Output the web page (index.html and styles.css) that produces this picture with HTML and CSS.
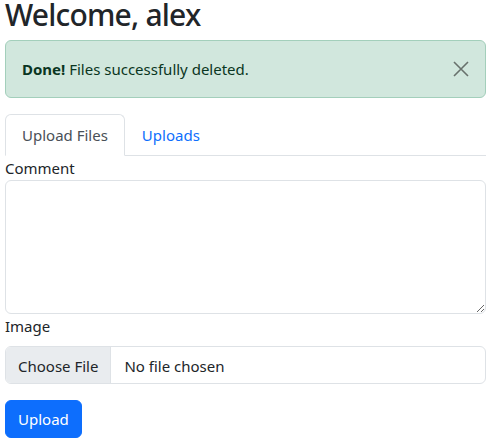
FILE: index.html
```html
<!DOCTYPE html>
<html lang="en">
<head>
<meta charset="utf-8">
<title>Welcome</title>
<link rel="stylesheet" href="styles.css">
</head>
<body>
<div class="container">
  <h1 class="title">Welcome, alex</h1>
  <div class="alert">
    <span><strong>Done!</strong> Files successfully deleted.</span>
    <button class="btn-close" type="button" aria-label="Close">
      <svg width="16" height="16" viewBox="0 0 16 16" aria-hidden="true"><path d="M1 1L15 15M15 1L1 15" stroke="currentColor" stroke-width="1.6" fill="none"/></svg>
    </button>
  </div>
  <ul class="tabs">
    <li><a class="tab active" href="#">Upload Files</a></li>
    <li><a class="tab" href="#">Uploads</a></li>
  </ul>
  <form class="form">
    <label class="label" for="comment">Comment</label>
    <textarea id="comment" class="control" rows="5"></textarea>
    <label class="label label-gap" for="image">Image</label>
    <input id="image" class="control file" type="file">
    <button class="btn" type="button">Upload</button>
  </form>
</div>
</body>
</html>
```

FILE: styles.css
```css
* { box-sizing: border-box; }
html, body { margin: 0; }
body {
  font-family: "Noto Sans", "Open Sans", sans-serif;
  font-size: 15px;
  line-height: 24px;
  color: #212529;
  background: #fff;
}
.container { padding: 0 5px; }
.title {
  margin: 0 0 10px;
  font-size: 30px;
  line-height: 30px;
  font-weight: 500;
  letter-spacing: -0.8px;
}
.alert {
  position: relative;
  background: #d1e7dd;
  border: 1px solid #a3cfbb;
  color: #0a3622;
  border-radius: 6px;
  padding: 16px 48px 16px 16px;
  margin-bottom: 16px;
}
.alert strong { font-weight: 700; }
.btn-close {
  position: absolute;
  top: 0; right: 0;
  width: 48px; height: 56px;
  border: 0; background: transparent; padding: 0;
  color: #68716c;
  display: flex; align-items: center; justify-content: center;
  cursor: pointer;
}
.tabs {
  list-style: none;
  margin: 0; padding: 0;
  display: flex;
  border-bottom: 1px solid #dee2e6;
}
.tabs li { margin-bottom: -1px; }
.tab {
  display: block;
  padding: 8px 16px;
  border: 1px solid transparent;
  border-top-left-radius: 6px;
  border-top-right-radius: 6px;
  color: #0d6efd;
  text-decoration: none;
}
.tab.active {
  color: #495057;
  border-color: #dee2e6 #dee2e6 #fff;
  background: #fff;
}
.form { display: flex; flex-direction: column; align-items: flex-start; }
.label { display: block; }
.label-gap { margin-bottom: 8px; }
.control {
  display: block;
  width: 100%;
  font: inherit;
  color: #212529;
  border: 1px solid #dee2e6;
  border-radius: 6px;
  padding: 6px 12px;
  line-height: 24px;
  background: #fff;
}
textarea.control { height: 134px; }
.file { overflow: hidden; height: 38px; padding: 6px 12px; }
.file::file-selector-button {
  font: inherit;
  color: #212529;
  background: #e9ecef;
  border: 0;
  border-right: 1px solid #dee2e6;
  border-radius: 0;
  margin: -6px 13px -6px -12px;
  padding: 6px 12px;
  height: 38px;
}
.btn {
  margin-top: 16px;
  font: inherit;
  color: #fff;
  background: #0d6efd;
  border: 1px solid #0d6efd;
  border-radius: 6px;
  padding: 6px 12px;
  line-height: 24px;
}
```
